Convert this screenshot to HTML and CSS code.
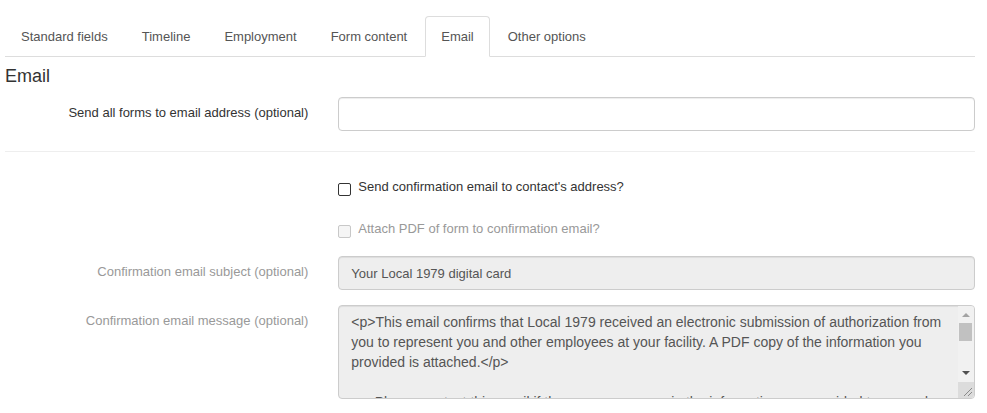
FILE: index.html
```html
<!DOCTYPE html>
<html lang="en">
<head>
<meta charset="utf-8">
<title>Email settings</title>
<link rel="stylesheet" href="styles.css">
</head>
<body>
<div class="page">
  <ul class="tabs">
    <li class="tab"><a>Standard fields</a></li>
    <li class="tab"><a>Timeline</a></li>
    <li class="tab"><a>Employment</a></li>
    <li class="tab"><a>Form content</a></li>
    <li class="tab active"><a>Email</a></li>
    <li class="tab"><a>Other options</a></li>
  </ul>

  <h4 class="section-title">Email</h4>

  <div class="form-row">
    <label class="control-label">Send all forms to email address (optional)</label>
    <div class="control"><input class="input" type="text"></div>
  </div>

  <hr class="divider">

  <div class="form-row check-row first">
    <div></div>
    <label class="check"><input type="checkbox" class="cb"><span>Send confirmation email to contact's address?</span></label>
  </div>

  <div class="form-row check-row second">
    <div></div>
    <label class="check disabled"><input type="checkbox" class="cb" disabled><span>Attach PDF of form to confirmation email?</span></label>
  </div>

  <div class="form-row">
    <label class="control-label disabled">Confirmation email subject (optional)</label>
    <div class="control"><input class="input" type="text" value="Your Local 1979 digital card" disabled></div>
  </div>

  <div class="form-row">
    <label class="control-label disabled">Confirmation email message (optional)</label>
    <div class="control ta-wrap">
      <textarea class="textarea" disabled>&lt;p&gt;This email confirms that Local 1979 received an electronic submission of authorization from you to represent you and other employees at your facility. A PDF copy of the information you provided is attached.&lt;/p&gt;

      Please contact this email if there are any errors in the information you provided to us, and we will update it.</textarea>
      <div class="vscroll">
        <div class="sb-btn">
          <svg width="16" height="17" viewBox="0 0 16 17"><path d="M4 11 L8 7 L12 11 Z" fill="#a3a3a3"/></svg>
        </div>
        <div class="sb-track"><div class="sb-thumb"></div></div>
        <div class="sb-btn">
          <svg width="16" height="17" viewBox="0 0 16 17"><path d="M4 6 L12 6 L8 10 Z" fill="#505050"/></svg>
        </div>
        <div class="sb-corner">
          <svg width="16" height="16" viewBox="0 0 16 16"><path d="M14 6 L6 14 M14 10 L10 14" stroke="#8a8a8a" stroke-width="1"/></svg>
        </div>
      </div>
    </div>
  </div>
</div>
</body>
</html>
```

FILE: styles.css
```css
* { box-sizing: border-box; }

html, body {
  margin: 0;
  padding: 0;
  background: #fff;
}

body {
  font-family: "Liberation Sans", Arial, sans-serif;
  font-size: 13px;
  line-height: 1.42857;
  color: #333;
}

.page {
  padding: 16px 12px 0 5px;
}

/* Tabs */
.tabs {
  display: flex;
  list-style: none;
  margin: 0;
  padding: 0;
  border-bottom: 1px solid #ddd;
}

.tab {
  margin-bottom: -1px;
}

.tab a {
  display: block;
  margin-right: 2px;
  padding: 10px 15px;
  line-height: 19px;
  border: 1px solid transparent;
  border-radius: 4px 4px 0 0;
  color: #555;
  cursor: pointer;
}

.tab.active a {
  background: #fff;
  border-color: #ddd #ddd transparent;
  color: #555;
}

.section-title {
  margin: 9px 0 11px;
  font-size: 18px;
  font-weight: 400;
  line-height: 20px;
  color: #333;
}

/* Form rows */
.form-row {
  display: grid;
  grid-template-columns: calc((100% + 30px) / 3 - 30px) 1fr;
  column-gap: 30px;
  margin-bottom: 15px;
}

.control-label {
  padding-top: 7px;
  text-align: right;
  color: #333;
}

.control-label.disabled {
  color: #999;
}

.input {
  display: block;
  width: 100%;
  height: 34px;
  padding: 6px 12px;
  font-family: inherit;
  font-size: 13px;
  color: #555;
  background: #fff;
  border: 1px solid #ccc;
  border-radius: 4px;
  box-shadow: inset 0 1px 1px rgba(0, 0, 0, .075);
  outline: none;
}

.input:disabled {
  background: #eee;
  color: #555;
  -webkit-text-fill-color: #555;
  opacity: 1;
}

.divider {
  margin: 20px 0 18px;
  border: 0;
  border-top: 1px solid #eee;
  height: 0;
}

/* Checkbox rows */
.check-row {
  padding-top: 7px;
}

.check-row.second {
  margin-bottom: 17px;
}

.check {
  display: flex;
  align-items: flex-start;
  line-height: 20px;
  color: #333;
}

.check.disabled {
  color: #999;
}

.cb {
  appearance: none;
  -webkit-appearance: none;
  flex: none;
  width: 13px;
  height: 13px;
  margin: 6px 7px 0 0;
  border: 1px solid #333;
  border-radius: 2px;
  background: #fff;
}

.cb:disabled {
  border-color: #c8c8c8;
  background: #f5f5f5;
}

/* Textarea */
.ta-wrap {
  position: relative;
}

.textarea {
  display: block;
  width: 100%;
  height: 94px;
  padding: 6px 30px 0 12px;
  font-family: "Liberation Sans", Arial, sans-serif;
  font-size: 14px;
  line-height: 20px;
  color: #555;
  -webkit-text-fill-color: #555;
  background: #eee;
  border: 1px solid #ccc;
  border-radius: 4px;
  box-shadow: inset 0 1px 1px rgba(0, 0, 0, .075);
  resize: none;
  overflow: hidden;
  opacity: 1;
  white-space: pre-wrap;
}

.vscroll {
  position: absolute;
  top: 1px;
  right: 1px;
  bottom: 1px;
  width: 16px;
  display: flex;
  flex-direction: column;
  background: #f1f1f1;
  border-radius: 0 3px 3px 0;
  overflow: hidden;
}

.sb-btn {
  height: 17px;
  flex: none;
}

.sb-btn svg,
.sb-corner svg {
  display: block;
}

.sb-track {
  flex: 1;
}

.sb-thumb {
  width: 13px;
  height: 18px;
  margin-left: 1px;
  background: #c1c1c1;
}

.sb-corner {
  height: 16px;
  flex: none;
  background: #dcdcdc;
}
```
